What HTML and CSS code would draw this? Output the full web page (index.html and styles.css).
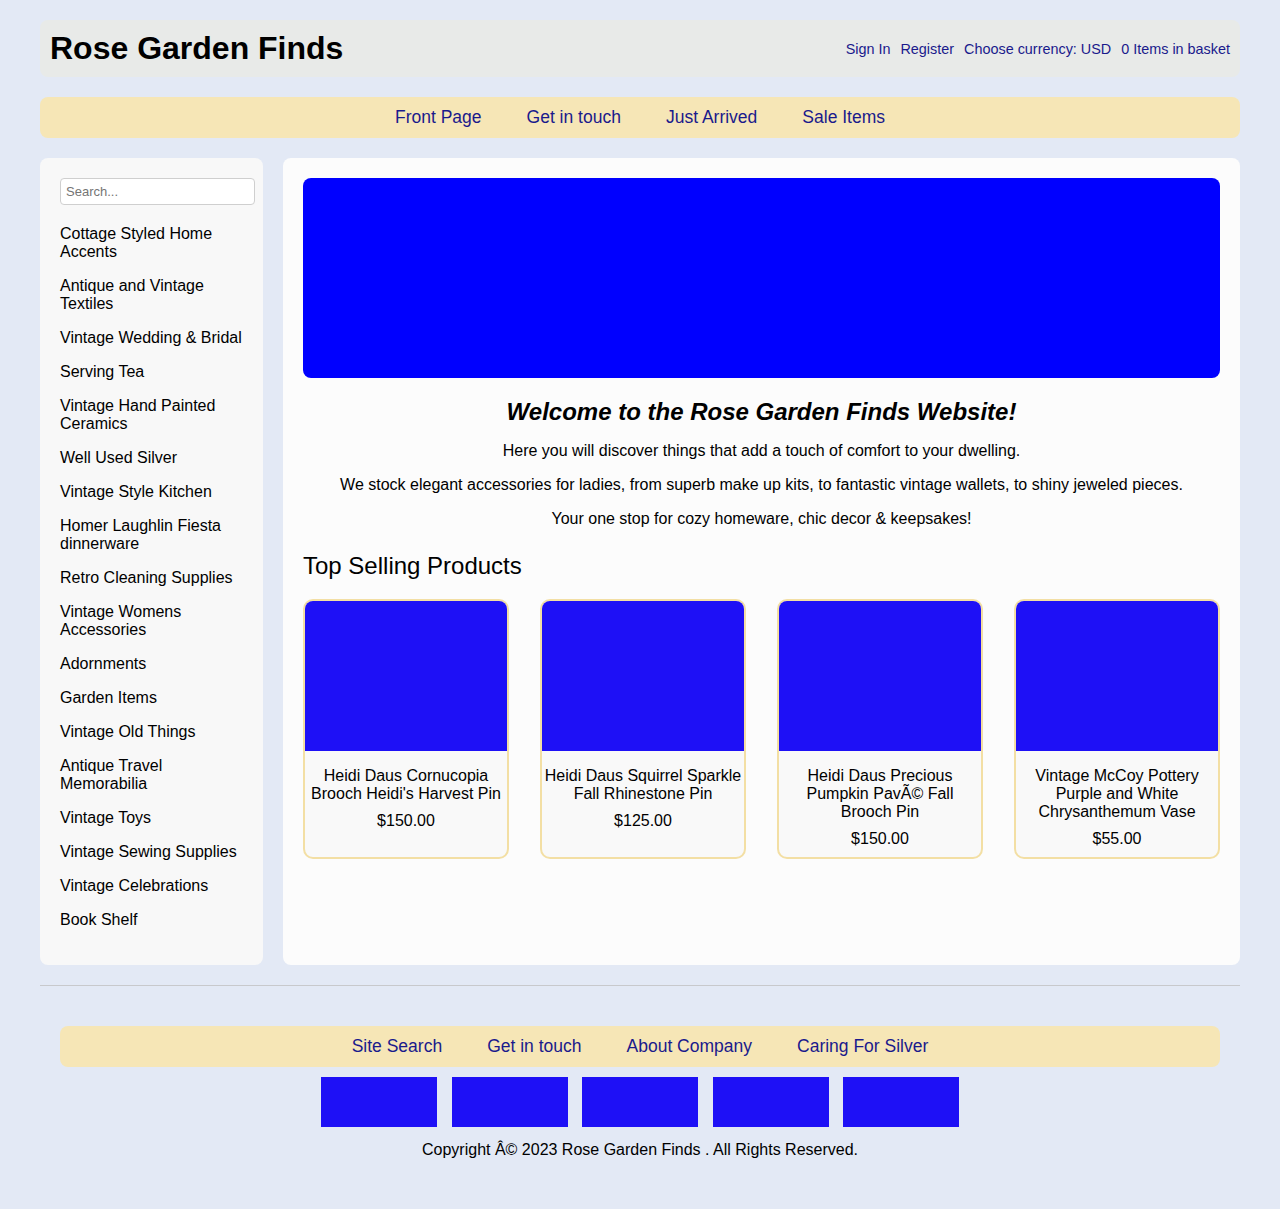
FILE: index.html
```html
<!DOCTYPE html>
<html lang="en">
<head>
<meta charset="utf-8">
<title>Rose Garden Finds</title>
<link rel="stylesheet" href="styles.css">
</head>
<body>
<div class="page">
  <header class="header">
    <h1 class="site-title">Rose Garden Finds</h1>
    <div class="account-links">
      <a href="#">Sign In</a>
      <a href="#">Register</a>
      <a href="#">Choose currency: USD</a>
      <a href="#">0 Items in basket</a>
    </div>
  </header>

  <nav class="navbar">
    <a href="#">Front Page</a>
    <a href="#">Get in touch</a>
    <a href="#">Just Arrived</a>
    <a href="#">Sale Items</a>
  </nav>

  <div class="main">
    <aside class="sidebar">
      <input class="search" type="text" placeholder="Search...">
      <ul class="categories">
        <li><a href="#">Cottage Styled Home Accents</a></li>
        <li><a href="#">Antique and Vintage Textiles</a></li>
        <li><a href="#">Vintage Wedding &amp; Bridal</a></li>
        <li><a href="#">Serving Tea</a></li>
        <li><a href="#">Vintage Hand Painted Ceramics</a></li>
        <li><a href="#">Well Used Silver</a></li>
        <li><a href="#">Vintage Style Kitchen</a></li>
        <li><a href="#">Homer Laughlin Fiesta dinnerware</a></li>
        <li><a href="#">Retro Cleaning Supplies</a></li>
        <li><a href="#">Vintage Womens Accessories</a></li>
        <li><a href="#">Adornments</a></li>
        <li><a href="#">Garden Items</a></li>
        <li><a href="#">Vintage Old Things</a></li>
        <li><a href="#">Antique Travel Memorabilia</a></li>
        <li><a href="#">Vintage Toys</a></li>
        <li><a href="#">Vintage Sewing Supplies</a></li>
        <li><a href="#">Vintage Celebrations</a></li>
        <li><a href="#">Book Shelf</a></li>
      </ul>
    </aside>

    <section class="content">
      <div class="banner"></div>
      <h2 class="welcome">Welcome to the Rose Garden Finds Website!</h2>
      <p class="intro first">Here you will discover things that add a touch of comfort to your dwelling.</p>
      <p class="intro">We stock elegant accessories for ladies, from superb make up kits, to fantastic vintage wallets, to shiny jeweled pieces.</p>
      <p class="intro">Your one stop for cozy homeware, chic decor &amp; keepsakes!</p>

      <h2 class="section-title">Top Selling Products</h2>
      <div class="products">
        <div class="card">
          <div class="card-img"></div>
          <div class="card-info">
            <p class="card-title">Heidi Daus Cornucopia Brooch Heidi's Harvest Pin</p>
            <p class="card-price">$150.00</p>
          </div>
        </div>
        <div class="card">
          <div class="card-img"></div>
          <div class="card-info">
            <p class="card-title">Heidi Daus Squirrel Sparkle Fall Rhinestone Pin</p>
            <p class="card-price">$125.00</p>
          </div>
        </div>
        <div class="card">
          <div class="card-img"></div>
          <div class="card-info">
            <p class="card-title">Heidi Daus Precious Pumpkin PavÃ© Fall Brooch Pin</p>
            <p class="card-price">$150.00</p>
          </div>
        </div>
        <div class="card">
          <div class="card-img"></div>
          <div class="card-info">
            <p class="card-title">Vintage McCoy Pottery Purple and White Chrysanthemum Vase</p>
            <p class="card-price">$55.00</p>
          </div>
        </div>
      </div>
    </section>
  </div>

  <hr class="divider">

  <footer class="footer">
    <nav class="navbar footer-nav">
      <a href="#">Site Search</a>
      <a href="#">Get in touch</a>
      <a href="#">About Company</a>
      <a href="#">Caring For Silver</a>
    </nav>
    <div class="badges">
      <div class="badge"></div>
      <div class="badge"></div>
      <div class="badge"></div>
      <div class="badge"></div>
      <div class="badge"></div>
    </div>
    <p class="copyright">Copyright Â© 2023 Rose Garden Finds . All Rights Reserved.</p>
  </footer>
</div>
</body>
</html>
```

FILE: styles.css
```css
* {
  box-sizing: content-box;
}

html, body {
  margin: 0;
  padding: 0;
}

body {
  background: #e3e9f5;
  font-family: "Liberation Sans", Arial, sans-serif;
  color: #000;
}

a {
  text-decoration: none;
}

.page {
  padding: 20px 40px 30px;
}

/* Header */
.header {
  display: flex;
  align-items: center;
  justify-content: space-between;
  background: #e8eae8;
  border-radius: 8px;
  padding: 0 10px;
  height: 57px;
}

.site-title {
  margin: 0;
  font-size: 32px;
  font-weight: bold;
}

.account-links {
  display: flex;
  gap: 10px;
  font-size: 14.4px;
  padding-top: 1px;
}

.account-links a {
  color: #1a1a8c;
}

/* Nav */
.navbar {
  margin-top: 20px;
  display: flex;
  justify-content: center;
  gap: 45px;
  background: #f6e6b6;
  border-radius: 8px;
  height: 41px;
  align-items: center;
  font-size: 17.5px;
}

.navbar a {
  color: #1a1a8c;
}

/* Main */
.main {
  margin-top: 20px;
  display: flex;
  gap: 20px;
  align-items: stretch;
}

.sidebar {
  width: 183px;
  flex: none;
  background: #f8f8f8;
  border-radius: 8px;
  padding: 20px 20px 28px;
}

.search {
  display: block;
  width: 100%;
  padding: 5px;
  font-size: 13px;
  font-family: "Liberation Sans", Arial, sans-serif;
  border: 1px solid #cfcfcf;
  border-radius: 4px;
  background: #fff;
  height: 15px;
  margin: 0;
}

.search::placeholder {
  color: #757575;
}

.categories {
  list-style: none;
  margin: 12px 0 0;
  padding: 0;
}

.categories li {
  padding: 8px 0;
  font-size: 16px;
  line-height: 18px;
}

.categories a {
  color: #000;
}

.content {
  flex: 1;
  background: #fcfcfc;
  border-radius: 8px;
  padding: 20px;
}

.banner {
  height: 200px;
  background: #0000ff;
  border-radius: 8px;
}

.welcome {
  margin: 20px 0 0;
  text-align: center;
  font-size: 24px;
  font-style: italic;
  font-weight: bold;
  line-height: 28px;
}

.intro {
  margin: 16px 0 0;
  text-align: center;
  font-size: 16px;
  line-height: 18px;
}

.intro.first {
  margin-top: 16px;
}

.section-title {
  margin: 24px 0 0;
  font-size: 24px;
  font-weight: normal;
  line-height: 28px;
}

.products {
  margin-top: 19px;
  display: grid;
  grid-template-columns: repeat(4, 1fr);
  gap: 31px;
}

.card {
  border: 2px solid #f3dfa4;
  border-radius: 10px;
  overflow: hidden;
  background: #f9f9f9;
  display: flex;
  flex-direction: column;
}

.card-img {
  height: 150px;
  background: #1e10f6;
}

.card-info {
  padding: 16px 0 9px;
  text-align: center;
}

.card-title {
  margin: 0;
  font-size: 16px;
  line-height: 18px;
}

.card-price {
  margin: 9px 0 0;
  font-size: 16px;
  line-height: 18px;
}

/* Footer */
.divider {
  margin: 20px 0 0;
  border: 0;
  border-top: 1px solid #c8c9cc;
  height: 0;
}

.footer {
  padding: 0 20px;
}

.footer-nav {
  margin-top: 40px;
}

.badges {
  margin-top: 10px;
  display: flex;
  justify-content: center;
  gap: 14.5px;
}

.badge {
  width: 116px;
  height: 50px;
  background: #1e10f6;
}

.copyright {
  margin: 14px 0 0;
  text-align: center;
  font-size: 16px;
  line-height: 18px;
}
```
